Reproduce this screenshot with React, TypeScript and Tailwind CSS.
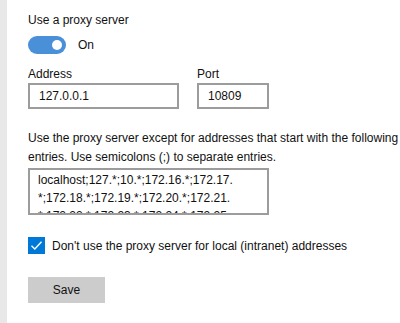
import React from 'react';

const font = { fontFamily: '"Segoe UI", "Liberation Sans", Arial, sans-serif' };

const App = () => {
  return (
    <div className="flex w-[400px] h-[323px] bg-white text-[12px] text-[#111] overflow-hidden" style={font}>
      {/* left nav edge */}
      <div className="w-[7px] shrink-0 bg-[#e8e8e8]" />

      <div className="flex-1 pl-[21px] pt-[12px] flex flex-col">
        <div className="leading-[16px]">Use a proxy server</div>

        {/* toggle */}
        <div className="flex items-center gap-[12px] mt-[8px]">
          <div className="w-[38px] h-[18px] rounded-full bg-[#4a90d9] flex items-center justify-end pr-[4px]">
            <div className="w-[10px] h-[10px] rounded-full bg-white" />
          </div>
          <span className="leading-[16px]">On</span>
        </div>

        {/* address / port */}
        <div className="flex gap-[18px] mt-[12px]">
          <div className="flex flex-col">
            <label className="leading-[16px]">Address</label>
            <div className="mt-[1px] w-[151px] h-[26px] border-2 border-[#9c9c9c] flex items-center pl-[9px] leading-none">
              127.0.0.1
            </div>
          </div>
          <div className="flex flex-col">
            <label className="leading-[16px]">Port</label>
            <div className="mt-[1px] w-[72px] h-[26px] border-2 border-[#9c9c9c] flex items-center pl-[9px] leading-none">
              10809
            </div>
          </div>
        </div>

        <p className="mt-[20px] leading-[19px] whitespace-nowrap">
          Use the proxy server except for addresses that start with the following
          <br />
          entries. Use semicolons (;) to separate entries.
        </p>

        <div className="mt-[1px] w-[241px] h-[47px] border-2 border-[#9c9c9c] overflow-hidden pl-[8px] pt-[1px]">
          <div className="leading-[18px] whitespace-nowrap">
            localhost;127.*;10.*;172.16.*;172.17.
            <br />
            *;172.18.*;172.19.*;172.20.*;172.21.
            <br />
            *;172.22.*;172.23.*;172.24.*;172.25.
          </div>
        </div>

        {/* checkbox */}
        <div className="flex items-center gap-[7px] mt-[22px]">
          <div className="w-[17px] h-[17px] bg-[#0078d7] flex items-center justify-center">
            <svg width="13" height="13" viewBox="0 0 13 13" fill="none">
              <path d="M1.5 6.8 L4.8 10 L11.5 2.8" stroke="white" strokeWidth="1.4" />
            </svg>
          </div>
          <span className="leading-[16px]">Don't use the proxy server for local (intranet) addresses</span>
        </div>

        <button className="mt-[23px] w-[77px] h-[26px] bg-[#cccccc] text-[#111] leading-none">
          Save
        </button>
      </div>
    </div>
  );
};

export default App;
